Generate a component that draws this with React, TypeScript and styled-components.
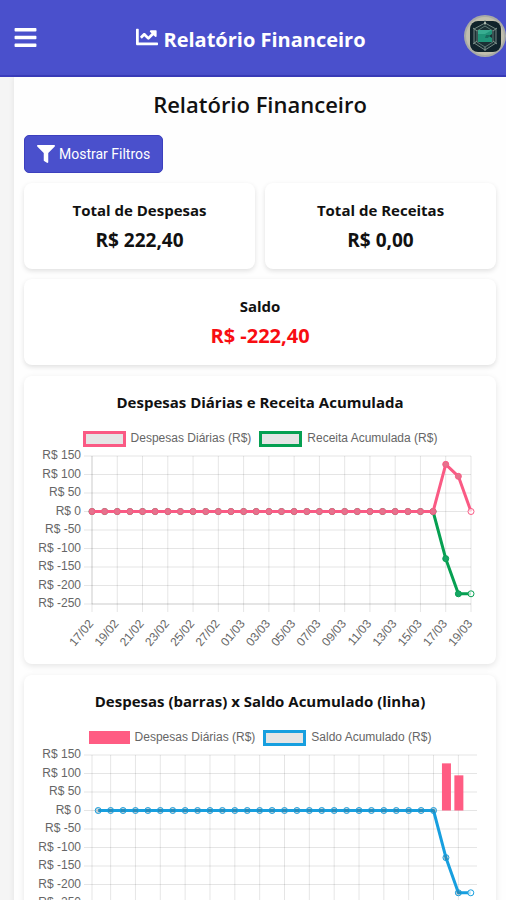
import React from "react";
import styled, { createGlobalStyle } from "styled-components";
import { FaBars, FaChartLine, FaFilter } from "react-icons/fa";

const GlobalStyle = createGlobalStyle`
  * { box-sizing: border-box; }
  body {
    margin: 0;
    background: #f5f5f5;
    color: #111;
    font-family: "Open Sans", "Noto Sans", sans-serif;
  }
`;

const Header = styled.header`
  display: grid;
  grid-template-columns: 48px 1fr 48px;
  align-items: center;
  height: 77px;
  color: #fff;
  background: #4a50cc;
  border-bottom: 2px solid #3a3cbc;
`;

const MenuButton = styled.button`
  display: flex;
  padding: 0 0 0 13px;
  border: 0;
  background: none;
  color: inherit;
  font-size: 25px;
`;

const PageTitle = styled.h1`
  display: flex;
  align-items: flex-start;
  justify-content: center;
  gap: 5px;
  margin: 4px 4px 0 0;
  font-size: 20px;
  line-height: 28px;
  font-weight: 700;
  white-space: nowrap;

  svg { font-size: 22px; }
`;

const Avatar = styled.a`
  display: block;
  height: 42px;
  margin: 0 0 4px 6px;

  svg { display: block; }
`;

const Content = styled.main`
  margin-left: 14px;
  padding: 11px 10px 10px;
  background: #fefefe;
  box-shadow: 0 0 6px rgba(0, 0, 0, 0.08);
`;

const SectionTitle = styled.h2`
  margin: 0 0 15px;
  font-size: 22px;
  line-height: 32px;
  font-weight: 600;
  text-align: center;
`;

const FilterButton = styled.button`
  display: flex;
  align-items: center;
  gap: 4px;
  height: 38px;
  margin-bottom: 10px;
  padding: 0 12px;
  border: 1px solid #3c3fbe;
  border-radius: 5px;
  background: #4a50cc;
  color: #fff;
  font: 14px/20px Roboto, "Liberation Sans", sans-serif;

  svg { font-size: 18px; }
`;

const Summary = styled.section`
  display: grid;
  grid-template-columns: 1fr 1fr;
  gap: 10px;
`;

const Card = styled.article<{ $wide?: boolean }>`
  grid-column: ${(p) => (p.$wide ? "1 / -1" : "auto")};
  padding: 13px 10px 15px;
  border-radius: 8px;
  background: #fff;
  box-shadow: 0 2px 5px rgba(0, 0, 0, 0.12);
  text-align: center;
`;

const CardLabel = styled.h3`
  margin: 0 0 2px;
  font-size: 15px;
  line-height: 28px;
  font-weight: 700;
`;

const CardValue = styled.p<{ $negative?: boolean }>`
  margin: 0;
  color: ${(p) => (p.$negative ? "#f80d12" : "#111")};
  font-size: ${(p) => (p.$negative ? 20 : 19)}px;
  line-height: 28px;
  font-weight: 700;
`;

const ChartCard = styled.section`
  margin-top: 11px;
  padding: 13px 10px 11px;
  border-radius: 8px;
  background: #fff;
  box-shadow: 0 2px 6px rgba(0, 0, 0, 0.1);
`;

const ChartTitle = styled.h3`
  margin: 0 0 14px;
  font-size: 15px;
  line-height: 26px;
  font-weight: 700;
  text-align: center;
`;

const Legend = styled.ul`
  display: flex;
  justify-content: center;
  gap: 8px;
  margin: 0;
  padding: 0;
  list-style: none;
`;

const LegendItem = styled.li`
  display: flex;
  align-items: center;
  gap: 5px;
  color: #666;
  font: 12px/19px "Liberation Sans", Arial, sans-serif;
  white-space: nowrap;
`;

const Swatch = styled.span<{ $color: string; $solid?: boolean }>`
  width: ${(p) => (p.$solid ? 41 : 43)}px;
  height: ${(p) => (p.$solid ? 13 : 16)}px;
  border: ${(p) => (p.$solid ? 0 : 3)}px solid ${(p) => p.$color};
  background: ${(p) => (p.$solid ? p.$color : "#e5e5e5")};
`;

const Plot = styled.svg`
  display: block;
  width: 100%;
  height: auto;

  text {
    fill: #666;
    font: 12px "Liberation Sans", Arial, sans-serif;
    text-anchor: end;
  }
`;

const PINK = "#fa5a84";
const GREEN = "#06a052";
const BLUE = "#179fdf";

const LEFT = 58;
const TOP = 8;
const BOTTOM = 156;
const TICKS = [150, 100, 50, 0, -50, -100, -150, -200, -250];

const days = Array.from({ length: 31 }, (_, i) => {
  const day = i < 12 ? 17 + i : i - 11;
  return `${String(day).padStart(2, "0")}/${i < 12 ? "02" : "03"}`;
});
const expenses = days.map((d) => (d === "17/03" ? 127.4 : d === "18/03" ? 95 : 0));
const balance = days.map((d) => (d === "17/03" ? -127.4 : d === "18/03" || d === "19/03" ? -222.4 : 0));

const yOf = (value: number) => TOP + ((150 - value) / 400) * (BOTTOM - TOP);

type SeriesProps = {
  values: number[];
  color: string;
  pointFill: string;
  xOf: (i: number) => number;
};

function LineSeries({ values, color, pointFill, xOf }: SeriesProps) {
  return (
    <g stroke={color}>
      <polyline
        points={values.map((v, i) => `${xOf(i)},${yOf(v)}`).join(" ")}
        fill="none"
        strokeWidth="3"
        strokeLinejoin="round"
      />
      {values.map((v, i) => (
        <circle
          key={days[i]}
          cx={xOf(i)}
          cy={yOf(v)}
          r="3"
          fill={i === values.length - 1 ? "rgba(255,255,255,.7)" : pointFill}
        />
      ))}
    </g>
  );
}

type ChartProps = {
  title: string;
  expensesAsBars?: boolean;
  lineLabel: string;
  lineColor: string;
  linePointFill: string;
};

function FinanceChart({ title, expensesAsBars, lineLabel, lineColor, linePointFill }: ChartProps) {
  const right = expensesAsBars ? 443 : 437;
  const step = expensesAsBars ? (right - LEFT) / days.length : (right - LEFT) / (days.length - 1);
  const xOf = (i: number) => LEFT + step * (expensesAsBars ? i + 0.5 : i);
  const labelled = days.map((d, i) => ({ d, i })).filter(({ i }) => i % 2 === (expensesAsBars ? 1 : 0));

  return (
    <ChartCard>
      <ChartTitle>{title}</ChartTitle>
      <Legend>
        <LegendItem>
          <Swatch $color={expensesAsBars ? "#ff5c83" : PINK} $solid={expensesAsBars} />
          Despesas Diárias (R$)
        </LegendItem>
        <LegendItem>
          <Swatch $color={lineColor} />
          {lineLabel}
        </LegendItem>
      </Legend>
      <Plot viewBox="0 0 452 205" role="img" aria-label={title}>
        <g stroke="#000" strokeOpacity=".1">
          {TICKS.map((t) => (
            <line key={t} x1={LEFT - 8} x2={right} y1={yOf(t)} y2={yOf(t)} />
          ))}
          <line x1={LEFT} x2={right} y1={BOTTOM} y2={BOTTOM} />
          <line x1={LEFT} x2={LEFT} y1={TOP} y2={BOTTOM} />
          {labelled.map(({ d, i }) => (
            <line key={d} x1={xOf(i)} x2={xOf(i)} y1={TOP} y2={BOTTOM + 8} />
          ))}
        </g>
        {TICKS.map((t) => (
          <text key={t} x={LEFT - 11} y={yOf(t) + 3}>{`R$ ${t}`}</text>
        ))}
        {labelled.map(({ d, i }) => (
          <text key={d} transform={`translate(${xOf(i) + 2} ${BOTTOM + 20}) rotate(-50)`}>
            {d}
          </text>
        ))}
        {expensesAsBars &&
          expenses.map((v, i) =>
            v > 0 ? (
              <rect key={days[i]} x={xOf(i) - 4} y={yOf(v)} width="9" height={yOf(0) - yOf(v)} fill="#ff5c83" />
            ) : null
          )}
        <LineSeries values={balance} color={lineColor} pointFill={linePointFill} xOf={xOf} />
        {!expensesAsBars && <LineSeries values={expenses} color={PINK} pointFill="#e4738d" xOf={xOf} />}
      </Plot>
    </ChartCard>
  );
}

function Emblem() {
  return (
    <svg width="42" height="42" viewBox="0 0 42 42" aria-hidden="true">
      <circle cx="21" cy="21" r="21" fill="#a8aaa5" />
      <circle cx="21" cy="21" r="19" fill="#c1bfae" />
      <rect x="6" y="6" width="31" height="31" rx="8" fill="#10232b" />
      <path d="M21 8 32 14v14l-11 7-11-7V14z" fill="#1b3034" stroke="#748884" strokeWidth="1" />
      <path d="M21 11 29 16v11l-8 5-8-5V16z" fill="none" stroke="#5d7874" />
      <path d="M21 5v5M9 13l4 3M33 13l-4 3M9 29l4-3M33 29l-4-3M21 32v4" stroke="#82958d" />
      <path d="M14 15h14v4l-3 2 3 2v4H14z" fill="#209479" />
      <path d="M14 15h14l-7 4h-7z" fill="#38ad91" />
      <path d="M22 20h4l-2 3h-3z" fill="#176b5e" />
      <circle cx="21" cy="8" r="1" fill="#c2cdbf" />
    </svg>
  );
}

export default function App() {
  return (
    <>
      <GlobalStyle />
      <Header>
        <MenuButton type="button" aria-label="Menu">
          <FaBars />
        </MenuButton>
        <PageTitle>
          <FaChartLine />
          Relatório Financeiro
        </PageTitle>
        <Avatar href="#perfil" aria-label="Perfil">
          <Emblem />
        </Avatar>
      </Header>
      <Content>
        <SectionTitle>Relatório Financeiro</SectionTitle>
        <FilterButton type="button">
          <FaFilter />
          Mostrar Filtros
        </FilterButton>
        <Summary>
          <Card>
            <CardLabel>Total de Despesas</CardLabel>
            <CardValue>R$ 222,40</CardValue>
          </Card>
          <Card>
            <CardLabel>Total de Receitas</CardLabel>
            <CardValue>R$ 0,00</CardValue>
          </Card>
          <Card $wide>
            <CardLabel>Saldo</CardLabel>
            <CardValue $negative>R$ -222,40</CardValue>
          </Card>
        </Summary>
        <FinanceChart
          title="Despesas Diárias e Receita Acumulada"
          lineLabel="Receita Acumulada (R$)"
          lineColor={GREEN}
          linePointFill="#17a565"
        />
        <FinanceChart
          title="Despesas (barras) x Saldo Acumulado (linha)"
          expensesAsBars
          lineLabel="Saldo Acumulado (R$)"
          lineColor={BLUE}
          linePointFill="rgba(70,90,100,.25)"
        />
      </Content>
    </>
  );
}
